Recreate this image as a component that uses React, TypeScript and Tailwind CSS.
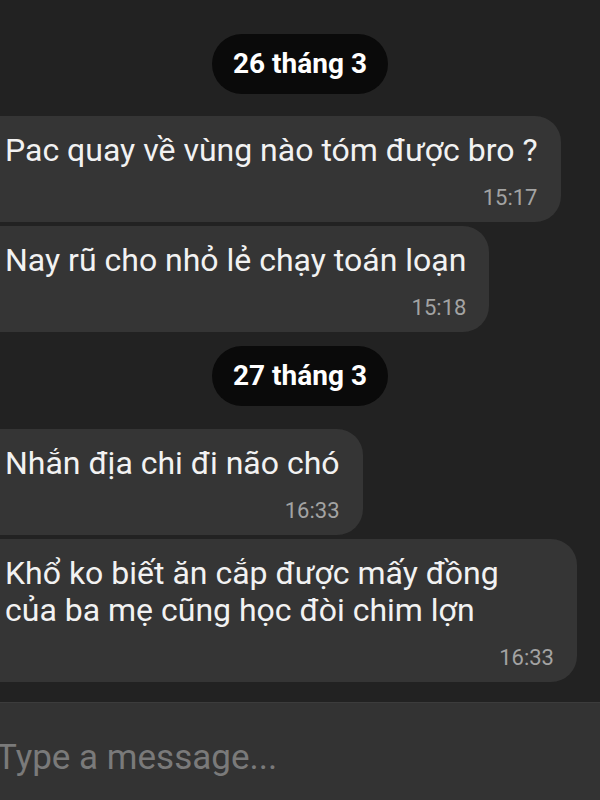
import React from "react";

type Msg = { text: string[]; time: string; wide?: boolean };

const days: { label: string; messages: Msg[] }[] = [
  {
    label: "26 tháng 3",
    messages: [
      { text: ["Pac quay về vùng nào tóm được bro ?"], time: "15:17" },
      { text: ["Nay rũ cho nhỏ lẻ chạy toán loạn"], time: "15:18" },
    ],
  },
  {
    label: "27 tháng 3",
    messages: [
      { text: ["Nhắn địa chi đi não chó"], time: "16:33" },
      {
        text: ["Khổ ko biết ăn cắp được mấy đồng", "của ba mẹ cũng học đòi chim lợn"],
        time: "16:33",
        wide: true,
      },
    ],
  },
];

function DatePill({ label }: { label: string }) {
  return (
    <div className="flex justify-center">
      <div className="h-[60px] px-[21px] rounded-full bg-[#0a0a0a] flex items-center text-[28px] font-bold text-white leading-none">
        {label}
      </div>
    </div>
  );
}

function Bubble({ msg }: { msg: Msg }) {
  return (
    <div className="flex">
      <div
        className={
          "-ml-6 pl-[29px] pr-[23px] pt-4 pb-[11px] rounded-[26px] bg-[#353535] flex flex-col" +
          (msg.wide ? " w-[601px]" : "")
        }
      >
        <div className="text-[32px] leading-[37px] text-[#f2f2f2]">
          {msg.text.map((line, i) => (
            <div key={i}>{line}</div>
          ))}
        </div>
        <div className="mt-[16px] self-end text-[22px] leading-[26px] text-[#a3a3a3]">
          {msg.time}
        </div>
      </div>
    </div>
  );
}

export default function App() {
  return (
    <div
      className="w-[600px] h-[800px] bg-[#222222] overflow-hidden flex flex-col"
      style={{ fontFamily: "Roboto, 'Noto Sans', sans-serif" }}
    >
      <div className="flex-1 flex flex-col pt-[34px]">
        <DatePill label={days[0].label} />
        <div className="mt-[22px] flex flex-col gap-1">
          {days[0].messages.map((m, i) => (
            <Bubble key={i} msg={m} />
          ))}
        </div>
        <div className="mt-[14px]">
          <DatePill label={days[1].label} />
        </div>
        <div className="mt-[23px] flex flex-col gap-1">
          {days[1].messages.map((m, i) => (
            <Bubble key={i} msg={m} />
          ))}
        </div>
      </div>
      <div className="h-[98px] border-t border-[#3c3c3c] bg-[#333333] flex items-center">
        <div className="-ml-[4px] text-[35px] text-[#7a7a7a] mt-[14px]">Type a message...</div>
      </div>
    </div>
  );
}
